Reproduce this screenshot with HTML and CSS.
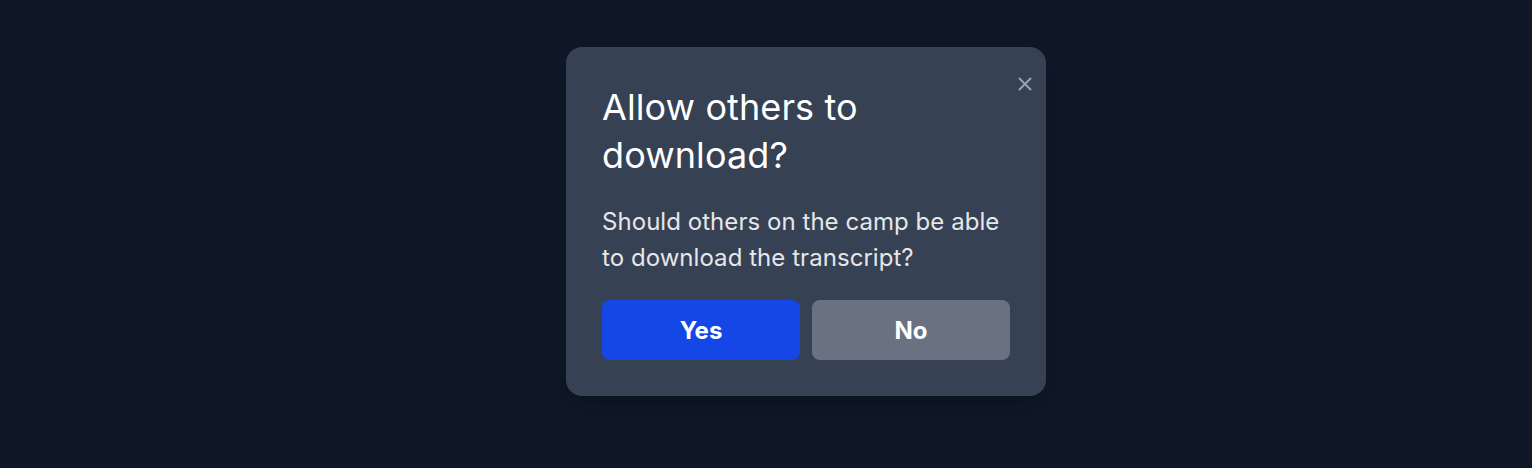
FILE: index.html
```html
<!DOCTYPE html>
<html lang="en">
<head>
<meta charset="utf-8">
<title>Allow others to download?</title>
<link rel="stylesheet" href="styles.css">
</head>
<body>
<div class="page">
  <div class="dialog" role="dialog">
    <button class="close" aria-label="Close">
      <svg width="14" height="14" viewBox="0 0 14 14" fill="none" stroke="currentColor" stroke-width="2" stroke-linecap="round"><path d="M1.5 1.5L12.5 12.5M12.5 1.5L1.5 12.5"/></svg>
    </button>
    <h2 class="title">Allow others to download?</h2>
    <p class="body">Should others on the camp be able to download the transcript?</p>
    <div class="actions">
      <button class="btn btn-yes">Yes</button>
      <button class="btn btn-no">No</button>
    </div>
  </div>
</div>
</body>
</html>
```
FILE: styles.css
```css
* { box-sizing: border-box; }
html, body { margin: 0; padding: 0; }
body {
  background: #101828;
  font-family: Inter, "Noto Sans", sans-serif;
  width: 1532px;
  height: 468px;
  overflow: hidden;
}
.page {
  display: flex;
  justify-content: center;
  padding-top: 47px;
  padding-left: 80px;
}
.dialog {
  position: relative;
  width: 480px;
  background: #364153;
  border-radius: 16px;
  padding: 36px;
  box-shadow: 0 10px 25px rgba(0,0,0,0.25);
}
.close {
  position: absolute;
  right: 14px;
  top: 30px;
  width: 14px;
  height: 14px;
  padding: 0;
  border: 0;
  background: none;
  color: #99a1af;
  display: flex;
  cursor: pointer;
}
.title {
  margin: 0;
  color: #ffffff;
  font-size: 36px;
  line-height: 48px;
  font-weight: 400;
  padding-right: 40px;
  letter-spacing: 0.1px;
}
.body {
  margin: 25px 0 0;
  color: #e5e7eb;
  font-size: 24px;
  line-height: 36px;
  letter-spacing: 0.05px;
}
.actions {
  display: flex;
  gap: 12px;
  margin-top: 24px;
}
.btn {
  flex: 1;
  height: 60px;
  border: 0;
  border-radius: 8px;
  color: #ffffff;
  font-family: Inter, "Noto Sans", sans-serif;
  font-size: 24px;
  font-weight: 700;
  cursor: pointer;
}
.btn-yes { background: #1447e6; }
.btn-no { background: #6a7282; }
```
